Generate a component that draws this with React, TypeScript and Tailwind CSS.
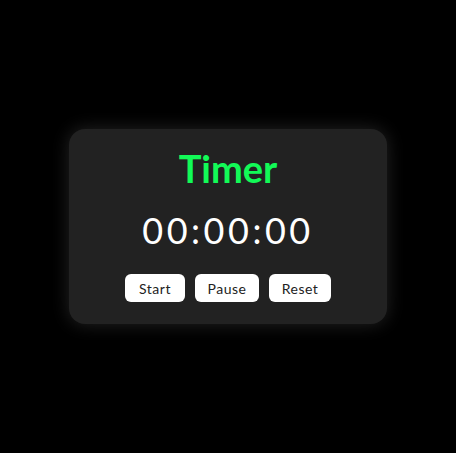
import React from 'react';

export default function App() {
  return (
    <div className="min-h-screen w-full bg-black flex items-center justify-center font-['Lato',sans-serif]">
      <div className="w-[318px] h-[195px] bg-[#222222] rounded-2xl shadow-[0_0_18px_rgba(255,255,255,0.14)] flex flex-col items-center pt-[19px]">
        {/* Title */}
        <h1 className="text-[38px] leading-[40px] font-bold text-[#12fa57]">Timer</h1>

        {/* Clock */}
        <div className="mt-[22px] text-[36px] leading-[40px] text-white tracking-[3.5px]">00:00:00</div>

        {/* Controls */}
        <div className="mt-[24px] flex gap-[10px]">
          <button className="h-[28px] w-[60px] bg-white rounded-md text-[14px] tracking-[0.5px] text-[#222]">Start</button>
          <button className="h-[28px] w-[64px] bg-white rounded-md text-[14px] tracking-[0.5px] text-[#222]">Pause</button>
          <button className="h-[28px] w-[62px] bg-white rounded-md text-[14px] tracking-[0.5px] text-[#222]">Reset</button>
        </div>
      </div>
    </div>
  );
}
